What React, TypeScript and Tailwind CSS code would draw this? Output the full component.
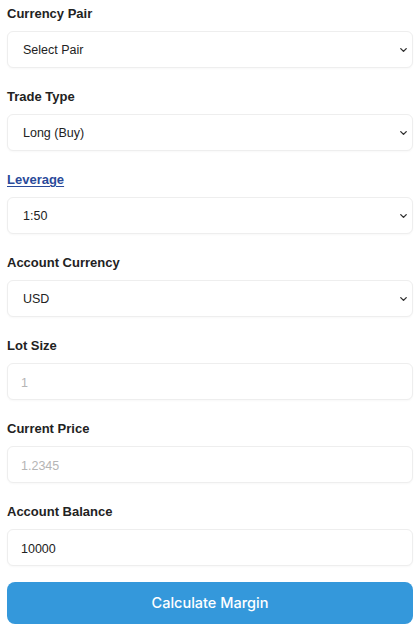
import React from 'react';
import { ChevronDown } from 'lucide-react';

const labelBase = 'block text-[13px] font-bold leading-[20px] mb-[7px]';
const boxCls =
  'w-full h-[37px] rounded-[6px] border border-[#eeeeee] bg-white shadow-[0_1px_2px_rgba(0,0,0,0.03)] text-[12.5px] text-[#222] outline-none';

const SelectField = ({ label, value, link }: { label: string; value: string; link?: boolean }) => (
  <div className="mb-[19px]">
    {link ? (
      <a href="#" className={`${labelBase} text-[#2a4a9a] underline underline-offset-2 w-fit`}>
        {label}
      </a>
    ) : (
      <label className={`${labelBase} text-[#222]`}>{label}</label>
    )}
    <div className="relative">
      <select className={`${boxCls} appearance-none pl-[15px] pr-8 pt-[2px]`} defaultValue={value}>
        <option>{value}</option>
      </select>
      <ChevronDown
        size={11}
        strokeWidth={3}
        className="absolute right-[4px] top-1/2 -translate-y-1/2 text-[#333] pointer-events-none"
      />
    </div>
  </div>
);

const InputField = ({ label, placeholder, value, last }: { label: string; placeholder?: string; value?: string; last?: boolean }) => (
  <div className={last ? 'mb-[16px]' : 'mb-[19px]'}>
    <label className={`${labelBase} text-[#222]`}>{label}</label>
    <input
      className={`${boxCls} px-[13px] pt-[2px] placeholder:text-[#b5b5b5]`}
      placeholder={placeholder}
      defaultValue={value}
    />
  </div>
);

export default function App() {
  return (
    <div className="w-[420px] h-[628px] bg-white px-[7px] pt-[4px] font-['Liberation_Sans',Arial,sans-serif] overflow-hidden">
      <SelectField label="Currency Pair" value="Select Pair" />
      <SelectField label="Trade Type" value="Long (Buy)" />
      <SelectField label="Leverage" value="1:50" link />
      <SelectField label="Account Currency" value="USD" />
      <InputField label="Lot Size" placeholder="1" />
      <InputField label="Current Price" placeholder="1.2345" />
      <InputField label="Account Balance" value="10000" last />
      <button className="w-full h-[42px] rounded-[8px] bg-[#3498db] text-white text-[14.5px] font-medium font-['Inter',sans-serif]">
        Calculate Margin
      </button>
    </div>
  );
}
